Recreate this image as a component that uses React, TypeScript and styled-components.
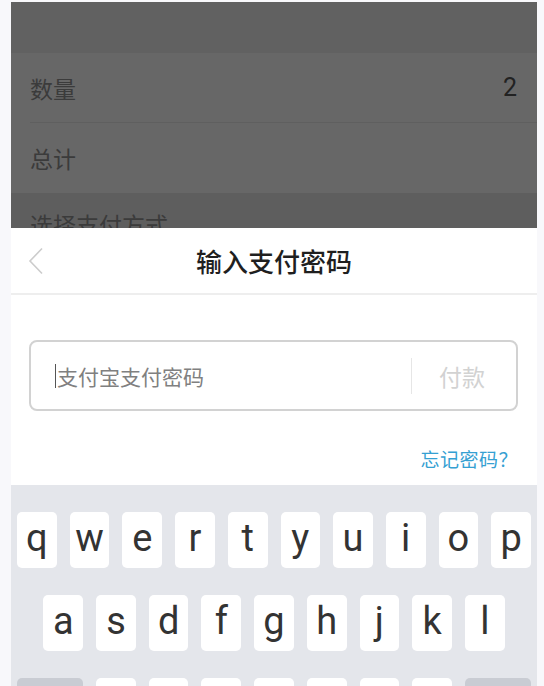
import styled, { createGlobalStyle } from 'styled-components'

const GlobalStyle = createGlobalStyle`
  html, body {
    margin: 0;
    padding: 0;
    background: #f8f8fb;
    overflow: hidden;
  }
  * { box-sizing: border-box; }
`

const Page = styled.div`
  height: 686px;
  overflow: hidden;
  padding: 2px 7px 0 11px;
`

const Phone = styled.div`
  width: 526px;
  font-family: Roboto, "Noto Sans CJK SC", sans-serif;
`

const TopBar = styled.div`
  height: 51px;
  background: #616161;
`

const RowList = styled.div`
  background: #676767;
  padding-left: 19px;
`

const Row = styled.div<{ $last?: boolean }>`
  height: 70px;
  display: flex;
  align-items: center;
  justify-content: space-between;
  padding-right: 20px;
  border-bottom: ${p => (p.$last ? 'none' : '1px solid #5f5f5f')};
`

const RowLabel = styled.span`
  font-family: "Noto Sans CJK SC", sans-serif;
  font-size: 23px;
  color: #3b3b3b;
`

const RowValue = styled.span`
  font-family: Roboto, sans-serif;
  font-size: 25px;
  color: #222;
`

const SectionBand = styled.div`
  height: 35px;
  background: #5e5e5e;
  overflow: hidden;
  padding: 20px 0 0 19px;
`

const BandLabel = styled.span`
  font-family: "Noto Sans CJK SC", sans-serif;
  font-size: 23px;
  line-height: 23px;
  color: #3b3b3b;
`

const Sheet = styled.div`
  background: #fff;
`

const SheetHeader = styled.div`
  height: 67px;
  position: relative;
  display: flex;
  align-items: center;
  justify-content: center;
  border-bottom: 2px solid #eeeeee;
`

const BackButton = styled.div`
  position: absolute;
  left: 17px;
  top: 19px;
  display: flex;
`

const Title = styled.h1`
  margin: 0;
  font-family: "Noto Sans CJK SC", sans-serif;
  font-weight: 500;
  font-size: 26px;
  color: #1f1f1f;
`

const SheetBody = styled.div`
  padding: 45px 19px 14px 18px;
  display: flex;
  flex-direction: column;
`

const InputBox = styled.div`
  height: 71px;
  border: 2px solid #d2d2d2;
  border-radius: 8px;
  display: flex;
  align-items: center;
  padding: 0 31px 0 24px;
`

const Cursor = styled.span`
  width: 1px;
  height: 24px;
  background: #555;
  margin-right: 1px;
`

const Placeholder = styled.span`
  flex: 1;
  font-family: "Noto Sans CJK SC", sans-serif;
  font-size: 21px;
  color: #808080;
`

const Divider = styled.span`
  width: 1px;
  height: 36px;
  background: #e6e6e6;
  margin-right: 27px;
`

const PayText = styled.span`
  font-family: "Noto Sans CJK SC", sans-serif;
  font-size: 23px;
  color: #d2d2d2;
`

const Forgot = styled.a`
  align-self: flex-end;
  margin-top: 35px;
  margin-right: 0;
  font-family: "Noto Sans CJK SC", sans-serif;
  font-size: 19px;
  line-height: 25px;
  letter-spacing: 0.5px;
  color: #35a0d2;
  text-decoration: none;
`

const Keyboard = styled.div`
  background: #e4e6eb;
  padding: 27px 0 0;
  display: flex;
  flex-direction: column;
  gap: 27px;
`

const KeyRow = styled.div`
  display: flex;
  justify-content: center;
  gap: 13px;
`

const Key = styled.div<{ $wide?: boolean; $dark?: boolean }>`
  width: ${p => (p.$wide ? '66px' : '39.7px')};
  height: 56px;
  border-radius: 5px;
  background: ${p => (p.$dark ? '#c9ccd3' : '#ffffff')};
  display: flex;
  align-items: center;
  justify-content: center;
  font-family: Roboto, sans-serif;
  font-size: 38px;
  color: #333;
  padding-bottom: 4px;
`

const rows = ['qwertyuiop', 'asdfghjkl', 'zxcvbnm']

export default function App() {
  return (
    <Page>
      <GlobalStyle />
      <Phone>
        <TopBar />
        <RowList>
          <Row>
            <RowLabel>数量</RowLabel>
            <RowValue>2</RowValue>
          </Row>
          <Row $last>
            <RowLabel>总计</RowLabel>
          </Row>
        </RowList>
        <SectionBand>
          <BandLabel>选择支付方式</BandLabel>
        </SectionBand>
        <Sheet>
          <SheetHeader>
            <BackButton>
              <svg width="16" height="28" viewBox="0 0 16 28" fill="none">
                <path d="M14 1.5 L2 14 L14 26.5" stroke="#cccccc" strokeWidth="1.6" />
              </svg>
            </BackButton>
            <Title>输入支付密码</Title>
          </SheetHeader>
          <SheetBody>
            <InputBox>
              <Cursor />
              <Placeholder>支付宝支付密码</Placeholder>
              <Divider />
              <PayText>付款</PayText>
            </InputBox>
            <Forgot>忘记密码？</Forgot>
          </SheetBody>
        </Sheet>
        <Keyboard>
          <KeyRow>
            {rows[0].split('').map(k => (
              <Key key={k}>{k}</Key>
            ))}
          </KeyRow>
          <KeyRow>
            {rows[1].split('').map(k => (
              <Key key={k}>{k}</Key>
            ))}
          </KeyRow>
          <KeyRow>
            <Key $wide $dark />
            {rows[2].split('').map(k => (
              <Key key={k}>{k}</Key>
            ))}
            <Key $wide $dark />
          </KeyRow>
        </Keyboard>
      </Phone>
    </Page>
  )
}
